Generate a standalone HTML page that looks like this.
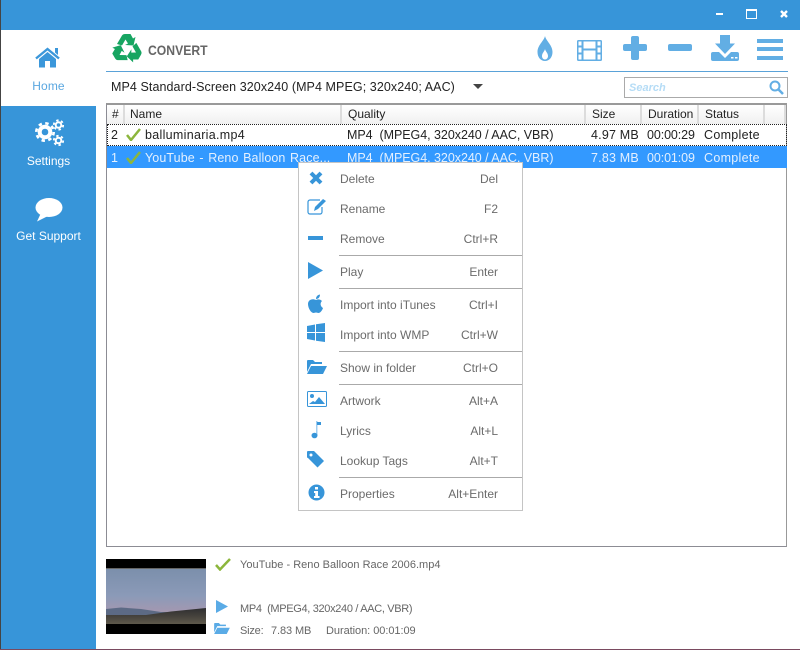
<!DOCTYPE html>
<html><head><meta charset="utf-8"><style>
html,body{margin:0;padding:0;background:#fff}
#r{position:relative;width:800px;height:650px;overflow:hidden;background:#fff;font-family:"Liberation Sans",sans-serif;font-size:12px;color:#222}
#r>*,#m>*{position:absolute}
.t{white-space:nowrap;line-height:16px}
.c{color:#6b6b6b;font-size:12px}
.k{color:#6b6b6b;font-size:12px;text-align:right;width:100px;left:99px}
.s{height:1px;background:#aaa;left:40px;width:183px}
.h{top:105px;height:19px;background:linear-gradient(#fff,#f0f0f0);border-right:2px solid #dcdcdc;box-sizing:border-box;line-height:18px;padding-left:6px;color:#222;white-space:nowrap}
.d{font-size:12.500px;letter-spacing:0}
.w{color:#e4f0ff}
</style></head><body><div id="r">
<div style="left:0;top:0;width:800px;height:30px;background:#3795d9"></div>
<div style="left:0;top:0;width:1px;height:650px;background:#444"></div>
<div style="left:1px;top:30px;width:95px;height:620px;background:#3795d9"></div>
<div style="left:1px;top:30px;width:95px;height:76px;background:#fff"></div>
<div style="left:0;top:649px;width:800px;height:1px;background:#7a4a60"></div>
<!-- window controls -->
<div style="left:716px;top:13px;width:7px;height:2px;background:#fff"></div>
<div style="left:746px;top:9px;width:11px;height:10px;border:1px solid #fff;border-top-width:2px;box-sizing:border-box"></div>
<svg style="left:779px;top:9px" width="10" height="10"><path d="M2 2L8 8M8 2L2 8" stroke="#fff" stroke-width="2.400"/></svg>
<!-- sidebar -->
<svg style="left:35px;top:47px" width="26" height="21" viewBox="0 0 26 21" fill="#3b97da"><path d="M1 11.500L12.500 2 24 11.500" fill="none" stroke="#3b97da" stroke-width="2.400"/><path d="M20 1h3v7l-3-2.500z"/><path d="M4 12L12.500 5 21 12v8.500h-6V14h-5v6.500H4z"/></svg>
<div class="t" style="left:1px;width:95px;text-align:center;top:78px;color:#5aa7e0;font-size:12px;letter-spacing:.1px">Home</div>
<svg style="left:34px;top:118px" width="31" height="29" viewBox="0 0 31 29" fill="none" stroke="#fff">
<circle cx="11" cy="14" r="5.300" stroke-width="4"/><circle cx="11" cy="14" r="8.700" stroke-width="2.600" stroke-dasharray="3.400 3.430"/>
<circle cx="24.500" cy="7" r="2.800" stroke-width="2"/><circle cx="24.500" cy="7" r="4.700" stroke-width="1.800" stroke-dasharray="2.400 2.520"/>
<circle cx="24.500" cy="22.500" r="2.800" stroke-width="2"/><circle cx="24.500" cy="22.500" r="4.700" stroke-width="1.800" stroke-dasharray="2.400 2.520"/>
</svg>
<div class="t" style="left:1px;width:95px;text-align:center;top:153px;color:#fff;font-size:12px">Settings</div>
<svg style="left:35px;top:198px" width="28" height="24" viewBox="0 0 28 24"><ellipse cx="14" cy="9.500" rx="13.500" ry="9.500" fill="#fff"/><path d="M6 15L2 23.500 13 18z" fill="#fff"/></svg>
<div class="t" style="left:1px;width:95px;text-align:center;top:228px;color:#fff;font-size:12px">Get Support</div>
<!-- header -->
<svg style="left:112px;top:33px" width="30" height="30" viewBox="0 0 30 30" fill="#17a561">
<path d="M5 11L10 2.500Q11 1 13 1L18.500 1 21 5.500 23.500 4 21.500 12.500 13 12 16 10.500 13.500 6.500 10 12.500z"/>
<path transform="rotate(120 15 16)" d="M5 11L10 2.500Q11 1 13 1L18.500 1 21 5.500 23.500 4 21.500 12.500 13 12 16 10.500 13.500 6.500 10 12.500z"/>
<path transform="rotate(240 15 16)" d="M5 11L10 2.500Q11 1 13 1L18.500 1 21 5.500 23.500 4 21.500 12.500 13 12 16 10.500 13.500 6.500 10 12.500z"/>
</svg>
<div class="t" style="left:148px;top:42px;color:#666;font-size:14px;font-weight:bold;transform:scaleX(.87);transform-origin:left">CONVERT</div>
<div style="left:106px;top:71px;width:682px;height:1px;background:#5aa2d8"></div>
<!-- toolbar -->
<svg style="left:535px;top:35px" width="20" height="27" viewBox="0 0 20 27"><path d="M10 1c1 5 7.500 9 7.500 16 0 5.500-3.500 9-7.500 9s-7.500-3.500-7.500-9C2.500 10 9 6 10 1z" fill="#62aee4"/><path d="M10 14c.5 2.500 3 4 3 7 0 2-1.300 3.500-3 3.500S7 23 7 21c0-3 2.500-4.500 3-7z" fill="#fff"/></svg>
<svg style="left:577px;top:40px" width="25" height="21" viewBox="0 0 25 21"><rect width="25" height="21" rx="1.500" fill="#62aee4"/><path d="M1.500 1.500h3v4h-3zM1.500 7.500h3v5h-3zM1.500 14.500h3v5h-3zM20.500 1.500h3v4h-3zM20.500 7.500h3v5h-3zM20.500 14.500h3v5h-3zM6.500 1.500h12v7h-12zM6.500 10.500h12v9h-12z" fill="#fff"/></svg>
<div style="left:623px;top:44px;width:24px;height:7px;border-radius:2px;background:#62aee4"></div>
<div style="left:631px;top:36px;width:8px;height:24px;border-radius:2px;background:#62aee4"></div>
<div style="left:668px;top:44px;width:24px;height:7px;border-radius:2px;background:#62aee4"></div>
<svg style="left:711px;top:35px" width="28" height="26" viewBox="0 0 28 26"><path d="M9 0h10v8.500h5L14 19 4 8.500h5z" fill="#62aee4"/><path d="M0 19a2 2 0 0 1 2-2h6l6 6 6-6h6a2 2 0 0 1 2 2v5a2 2 0 0 1-2 2H2a2 2 0 0 1-2-2z" fill="#62aee4"/><path d="M20 22h2.500v1.500H20zM24 22h2.500v1.500H24z" fill="#fff"/></svg>
<div style="left:757px;top:39px;width:26px;height:4px;background:#62aee4"></div>
<div style="left:757px;top:47px;width:26px;height:4px;background:#62aee4"></div>
<div style="left:757px;top:56px;width:26px;height:4px;background:#62aee4"></div>
<!-- format -->
<div class="t" style="left:111px;top:79px;font-size:12.500px;letter-spacing:.08px;color:#222">MP4 Standard-Screen 320x240 (MP4 MPEG; 320x240; AAC)</div>
<div style="left:473px;top:84px;width:0;height:0;border-left:5px solid transparent;border-right:5px solid transparent;border-top:5px solid #444"></div>
<div style="left:624px;top:77px;width:162px;height:19px;border:1px solid #aaa"></div>
<div class="t" style="left:629px;top:80px;font-size:11px;font-style:italic;font-weight:bold;color:#b5dcf6">Search</div>
<svg style="left:769px;top:80px" width="15" height="15" viewBox="0 0 15 15"><circle cx="6" cy="6" r="4.500" fill="none" stroke="#62aee4" stroke-width="2"/><path d="M9.500 9.500L14 14" stroke="#62aee4" stroke-width="2.500"/></svg>
<!-- table -->
<div style="left:106px;top:103px;width:679px;height:441px;border-style:solid;border-width:2px 1px 1px 1px;border-color:#999 #999 #8c8c94 #8c8c94"></div>
<div class="h" style="left:107px;width:18px;padding-left:5px">#</div>
<div class="h" style="left:125px;width:217px;padding-left:5px">Name</div>
<div class="h" style="left:342px;width:244px">Quality</div>
<div class="h" style="left:586px;width:56px">Size</div>
<div class="h" style="left:642px;width:57px">Duration</div>
<div class="h" style="left:699px;width:66px">Status</div>
<div class="h" style="left:765px;width:21px"></div>
<div style="left:107px;top:124px;width:680px;height:22px;border:1px dotted #222;box-sizing:border-box"></div>
<div style="left:107px;top:146px;width:680px;height:22px;background:#3399ff"></div>
<div class="t d" style="left:111px;top:127px">2</div>
<div class="t d" style="left:145px;top:127px;letter-spacing:.3px">balluminaria.mp4</div>
<div class="t d" style="left:347px;top:127px;letter-spacing:-.04px;white-space:pre">MP4  (MPEG4, 320x240 / AAC, VBR)</div>
<div class="t d" style="left:591px;top:127px;letter-spacing:.2px">4.97 MB</div>
<div class="t d" style="left:647px;top:127px;letter-spacing:-.1px">00:00:29</div>
<div class="t d" style="left:704px;top:127px;letter-spacing:.3px">Complete</div>
<svg style="left:126px;top:128px" width="15" height="13" viewBox="0 0 15 13"><path d="M1 7l4 5L14 1" fill="none" stroke="#8cb63c" stroke-width="2.500"/></svg>
<div class="t d w" style="left:111px;top:150px">1</div>
<div class="t d w" style="left:145px;top:150px;letter-spacing:.1px;word-spacing:1px">YouTube - Reno Balloon Race...</div>
<div class="t d w" style="left:347px;top:150px;letter-spacing:-.04px;white-space:pre">MP4  (MPEG4, 320x240 / AAC, VBR)</div>
<div class="t d w" style="left:591px;top:150px;letter-spacing:.2px">7.83 MB</div>
<div class="t d w" style="left:647px;top:150px;letter-spacing:-.1px">00:01:09</div>
<div class="t d w" style="left:704px;top:150px;letter-spacing:.3px">Complete</div>
<svg style="left:126px;top:151px" width="15" height="13" viewBox="0 0 15 13"><path d="M1 7l4 5L14 1" fill="none" stroke="#8cb63c" stroke-width="2.500"/></svg>
<!-- menu -->
<div id="m" style="left:298px;top:162px;width:225px;height:349px;background:#fff;border:1px solid #c4c4c4;box-sizing:border-box">
<svg style="left:10px;top:8px" width="14" height="14" viewBox="0 0 14 14"><path d="M2 2l10 10M12 2L2 12" stroke="#3795d9" stroke-width="4"/></svg>
<div class="t c" style="left:41px;top:8px">Delete</div><div class="t k" style="top:8px">Del</div>
<svg style="left:8px;top:35px" width="20" height="18" viewBox="0 0 20 18"><path d="M13 2H3a2 2 0 0 0-2 2v10a2 2 0 0 0 2 2h10a2 2 0 0 0 2-2V9" fill="none" stroke="#3795d9" stroke-width="1.200"/><path d="M16 1l3 2-8 8-4 2 1-4z" fill="#3795d9"/></svg>
<div class="t c" style="left:41px;top:38px">Rename</div><div class="t k" style="top:38px">F2</div>
<div style="left:9px;top:73px;width:15px;height:4px;background:#3795d9"></div>
<div class="t c" style="left:41px;top:68px">Remove</div><div class="t k" style="top:68px">Ctrl+R</div>
<div class="s" style="top:92px"></div>
<svg style="left:9px;top:99px" width="15" height="17"><path d="M0 0L15 8.500 0 17z" fill="#3795d9"/></svg>
<div class="t c" style="left:41px;top:101px">Play</div><div class="t k" style="top:101px">Enter</div>
<div class="s" style="top:125px"></div>
<svg style="left:9px;top:131px" width="16" height="20" viewBox="0 0 16 20" fill="#3795d9"><path d="M8 6c2-1 4-1 6 1-2 2-2 5 1 7-1 3-3 5-4.500 5-1 0-1.500-.5-2.500-.5s-1.500.5-2.500.5C3 19 0 14 0 10c0-4 4-6 8-4z"/><path d="M8 5c0-2 1-4 4-4.500C12 3 10.500 5 8 5z"/></svg>
<div class="t c" style="left:41px;top:134px">Import into iTunes</div><div class="t k" style="top:134px">Ctrl+I</div>
<svg style="left:8px;top:160px" width="18" height="19" viewBox="0 0 18 19" fill="#3795d9"><path d="M0 3l8-1.500V9H0zM9 1.300L18 0v9H9zM0 10h8v7.500L0 16zM9 10h9v9l-9-1.300z"/></svg>
<div class="t c" style="left:41px;top:164px">Import into WMP</div><div class="t k" style="top:164px">Ctrl+W</div>
<div class="s" style="top:188px"></div>
<svg style="left:8px;top:196px" width="20" height="15" viewBox="0 0 20 15" fill="#3795d9"><path d="M0 13V2a1 1 0 0 1 1-1h5l2 2h7v2H4z"/><path d="M0 15l4-8h16l-4 8z"/></svg>
<div class="t c" style="left:41px;top:197px">Show in folder</div><div class="t k" style="top:197px">Ctrl+O</div>
<div class="s" style="top:221px"></div>
<svg style="left:8px;top:228px" width="20" height="16" viewBox="0 0 20 16"><rect x=".5" y=".5" width="19" height="15" rx="1" fill="none" stroke="#3795d9"/><circle cx="5" cy="5" r="2" fill="#3795d9"/><path d="M2 13l4-3 2 1 4-5 6 7z" fill="#3795d9"/></svg>
<div class="t c" style="left:41px;top:230px">Artwork</div><div class="t k" style="top:230px">Alt+A</div>
<svg style="left:12px;top:258px" width="10" height="18" viewBox="0 0 10 18"><rect x="5" y="0" width="1.500" height="14" fill="#9fcdf0"/><rect x="6" y="1" width="4" height="3" fill="#3795d9"/><ellipse cx="3.500" cy="14.500" rx="3" ry="2.800" fill="#3795d9"/></svg>
<div class="t c" style="left:41px;top:260px">Lyrics</div><div class="t k" style="top:260px">Alt+L</div>
<svg style="left:8px;top:288px" width="18" height="17" viewBox="0 0 18 17"><path d="M1 0h6l10 10-6.500 6.500L1 7a1 1 0 0 1-1-1V1a1 1 0 0 1 1-1z" fill="#3795d9"/><circle cx="4" cy="4" r="1.500" fill="#fff"/></svg>
<div class="t c" style="left:41px;top:290px">Lookup Tags</div><div class="t k" style="top:290px">Alt+T</div>
<div class="s" style="top:314px"></div>
<svg style="left:9px;top:321px" width="17" height="17" viewBox="0 0 17 17"><circle cx="8.500" cy="8.500" r="8" fill="#3795d9"/><rect x="7" y="3" width="3" height="2.500" fill="#fff"/><path d="M6 7h4v5h1.500v2h-5.500v-2h1.200v-3H6z" fill="#fff"/></svg>
<div class="t c" style="left:41px;top:323px">Properties</div><div class="t k" style="top:323px">Alt+Enter</div>
</div>
<!-- bottom -->
<svg style="left:106px;top:559px" width="100" height="75" viewBox="0 0 100 75">
<defs>
<linearGradient id="sky" x1="0" y1="0" x2="0" y2="1"><stop offset="0" stop-color="#7b8fab"/><stop offset=".5" stop-color="#8b9ab8"/><stop offset=".8" stop-color="#a598b0"/><stop offset="1" stop-color="#b99ba6"/></linearGradient>
<linearGradient id="land" x1="0" y1="0" x2="0" y2="1"><stop offset="0" stop-color="#2e2e30"/><stop offset=".5" stop-color="#45423c"/><stop offset="1" stop-color="#5f5a4c"/></linearGradient>
</defs>
<rect width="100" height="75" fill="#000"/>
<rect y="9" width="100" height="56" fill="url(#sky)"/>
<rect y="9" width="100" height="1" fill="#666"/>
<path d="M0 50L15 48.500 35 50 55 53 70 53 70 60 0 60z" fill="#5c6a85"/>
<path d="M0 56L40 56 65 52.500 100 49 100 65 0 65z" fill="url(#land)"/>
</svg>
<svg style="left:215px;top:558px" width="16" height="13" viewBox="0 0 16 13"><path d="M1 7l4 4.500L15 1" fill="none" stroke="#8cb63c" stroke-width="2.500"/></svg>
<div class="t c" style="left:240px;top:557px;font-size:11px;letter-spacing:.02px;color:#666">YouTube - Reno Balloon Race 2006.mp4</div>
<svg style="left:216px;top:600px" width="13" height="13"><path d="M0 0L12 6.500 0 13z" fill="#5aabe6"/></svg>
<div class="t c" style="left:240px;top:601px;font-size:11px;letter-spacing:-.33px;color:#666;white-space:pre">MP4  (MPEG4, 320x240 / AAC, VBR)</div>
<svg style="left:214px;top:623px" width="16" height="11" viewBox="0 0 20 14" fill="#5aabe6"><path d="M0 12V1a1 1 0 0 1 1-1h5l2 2h7v2H4z"/><path d="M0 14l4-8h16l-4 8z"/></svg>
<div class="t c" style="left:240px;top:623px;font-size:11px;letter-spacing:-.2px;color:#666">Size:</div>
<div class="t c" style="left:271px;top:623px;font-size:11px;letter-spacing:-.1px;color:#666">7.83 MB</div>
<div class="t c" style="left:326px;top:623px;font-size:11px;letter-spacing:-.05px;color:#666">Duration: 00:01:09</div>
</div></body></html>
